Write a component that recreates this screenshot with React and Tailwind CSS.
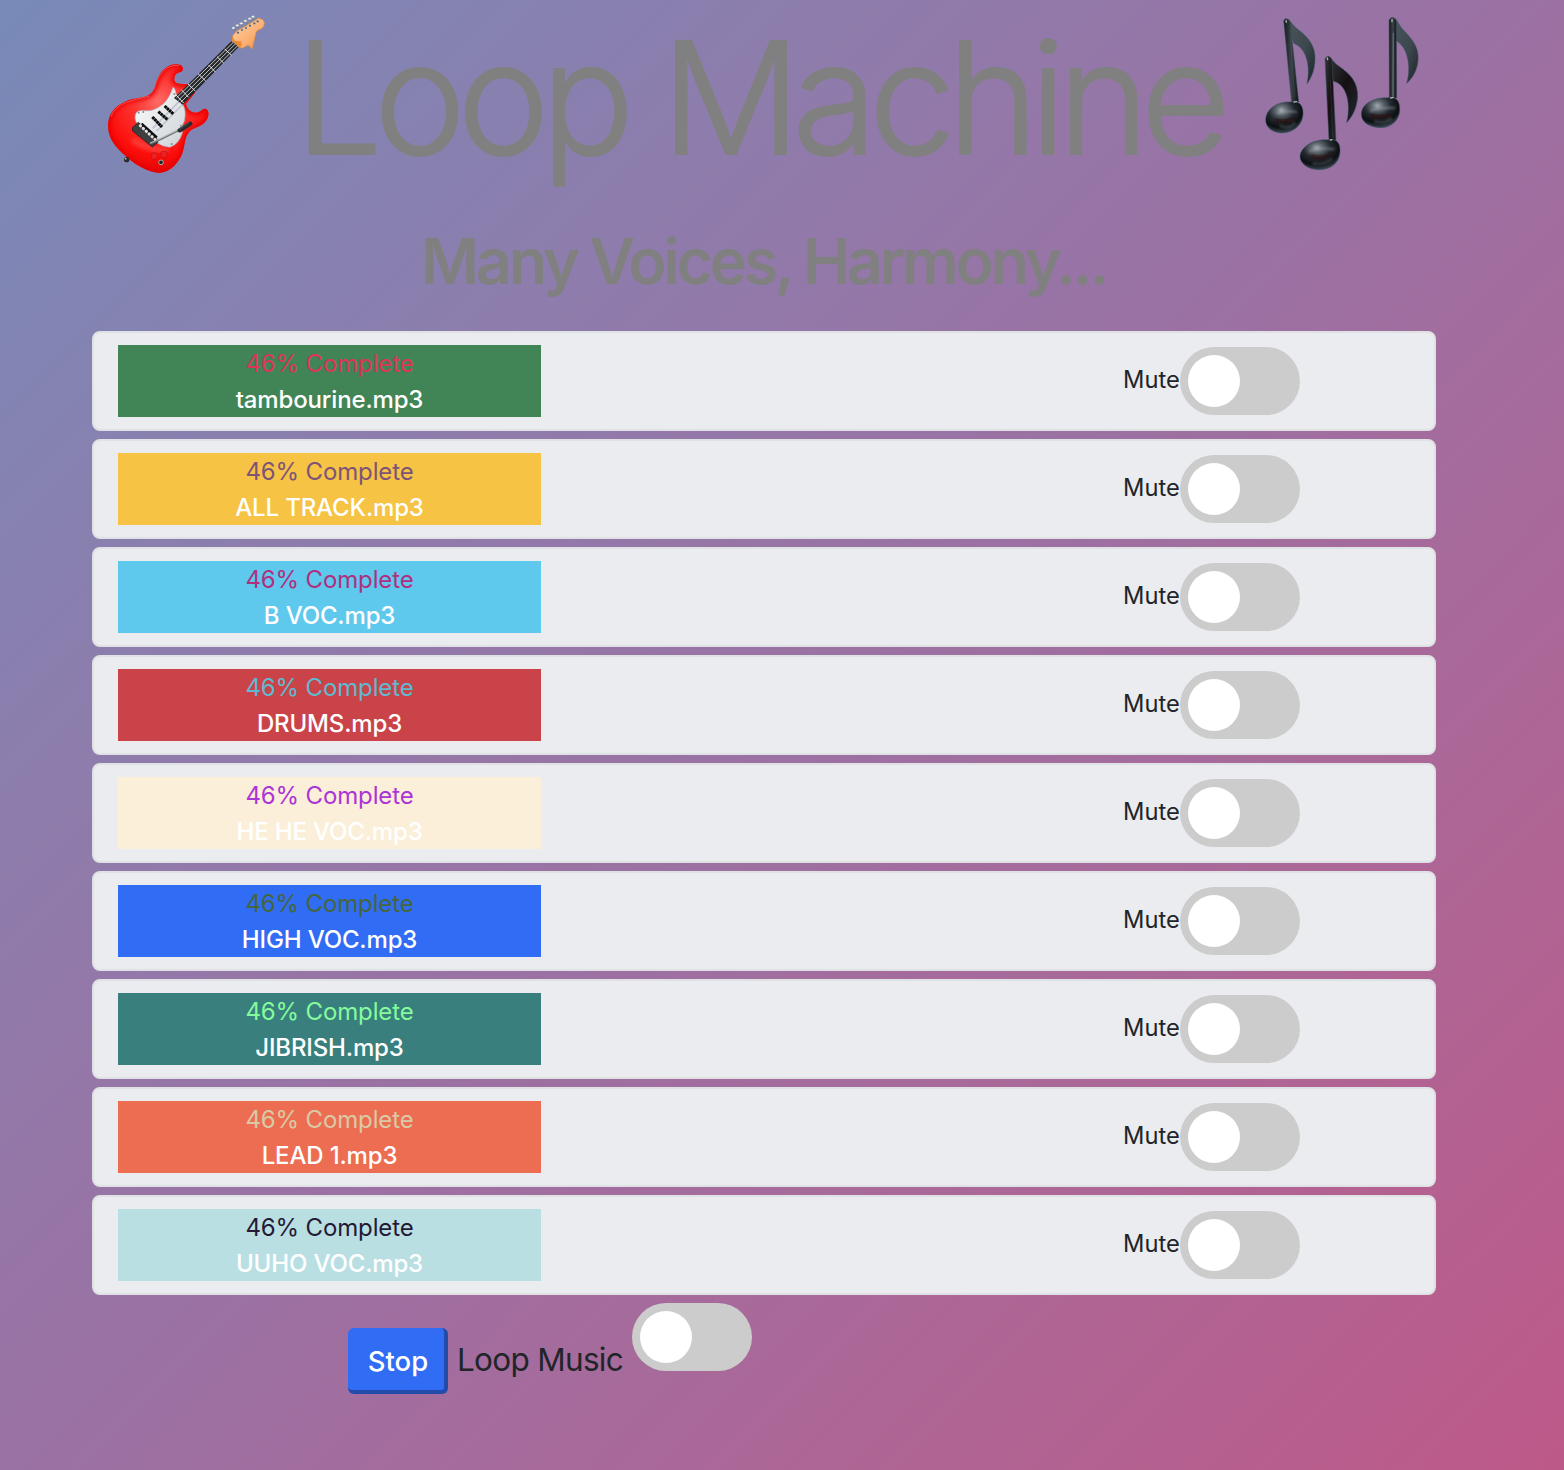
const tracks = [
  { name: "tambourine.mp3", bar: "bg-[#418557]", text: "text-[#dc3558]" },
  { name: "ALL TRACK.mp3", bar: "bg-[#f6c344]", text: "text-[#7d5478]" },
  { name: "B VOC.mp3", bar: "bg-[#5fc8ed]", text: "text-[#b0307f]" },
  { name: "DRUMS.mp3", bar: "bg-[#ca4348]", text: "text-[#5fb9d0]" },
  { name: "HE HE VOC.mp3", bar: "bg-[#fcefd9]", text: "text-[#ab35d6]" },
  { name: "HIGH VOC.mp3", bar: "bg-[#316cf4]", text: "text-[#46663c]" },
  { name: "JIBRISH.mp3", bar: "bg-[#387f7e]", text: "text-[#85fb9c]" },
  { name: "LEAD 1.mp3", bar: "bg-[#ed6d52]", text: "text-[#d9c9a4]" },
  { name: "UUHO VOC.mp3", bar: "bg-[#b9dfe3]", text: "text-[#241a36]" },
];

function Toggle() {
  return (
    <button type="button" role="switch" aria-checked="false" aria-label="toggle" className="flex h-[68px] w-[120px] shrink-0 items-center rounded-full bg-[#ccc] p-2">
      <span className="size-[52px] rounded-full bg-white" />
    </button>
  );
}

function Guitar() {
  return (
    <svg viewBox="0 0 540 540" className="size-[180px] shrink-0" aria-hidden="true">
      <defs>
        <radialGradient id="body" gradientUnits="userSpaceOnUse" cx="190" cy="290" r="220">
          <stop offset="0" stopColor="#ff6a64" />
          <stop offset="0.35" stopColor="#fb3330" />
          <stop offset="0.75" stopColor="#fc0d0a" />
          <stop offset="1" stopColor="#dc0808" />
        </radialGradient>
        <linearGradient id="guard" x1="0" y1="0" x2="1" y2="1">
          <stop offset="0" stopColor="#fff" />
          <stop offset="1" stopColor="#ccd1d6" />
        </linearGradient>
        <linearGradient id="head" x1="0" y1="0" x2="1" y2="1">
          <stop offset="0" stopColor="#ffd0a0" />
          <stop offset="0.6" stopColor="#fbb075" />
          <stop offset="1" stopColor="#e98b35" />
        </linearGradient>
        <filter id="soft" x="-20%" y="-20%" width="140%" height="140%"><feGaussianBlur stdDeviation="7" /></filter>
        <clipPath id="bodyClip">
          <path d="M165 268C185 252 176 235 197 204C214 180 238 173 256 180C266 185 266 197 258 201C246 202 237 210 238 225C240 237 253 237 281 237L301 262L273 297C278 316 289 322 302 323C319 323 322 309 332 312C344 317 343 332 334 346C321 367 300 365 285 378C264 400 273 428 256 458C239 488 213 505 188 503C139 497 98 460 69 431C45 405 37 380 40 351C44 318 68 300 90 290C116 278 150 280 165 268Z" />
        </clipPath>
      </defs>
      <g clipPath="url(#bodyClip)">
        <rect width="540" height="540" fill="url(#body)" />
        <path d="M165 268C185 252 176 235 197 204C214 180 238 173 256 180C266 185 266 197 258 201C246 202 237 210 238 225C240 237 253 237 281 237L301 262L273 297C278 316 289 322 302 323C319 323 322 309 332 312C344 317 343 332 334 346C321 367 300 365 285 378C264 400 273 428 256 458C239 488 213 505 188 503C139 497 98 460 69 431C45 405 37 380 40 351C44 318 68 300 90 290C116 278 150 280 165 268Z" fill="none" stroke="#e90000" strokeWidth="16" filter="url(#soft)" />
        <path d="M48 335Q57 307 92 293Q128 280 163 274M178 251Q189 207 217 188Q235 178 252 182" fill="none" stroke="#ff8b85" strokeWidth="3" opacity="0.5" />
        <path d="M112 405Q170 440 219 435" fill="none" stroke="#ff7770" strokeWidth="18" opacity="0.4" filter="url(#soft)" />
      </g>
      <path d="M234 247Q241 250 244 269L263 298Q275 318 268 348Q257 369 262 383Q252 418 224 427Q200 423 184 413L132 361Q117 348 121 329Q125 314 151 317Q175 321 205 297Q223 280 234 247Z" fill="url(#guard)" stroke="#aeb5bb" strokeWidth="2" />
      <path d="M252 290L173 370M262 299L185 378" stroke="#bfc4d0" strokeWidth="5" />
      <path d="M280 237L409 109L431 126L263 299L237 279Z" fill="#25282b" />
      <path d="M244 279L416 111M250 286L422 116M257 292L428 122" stroke="#f0f0f0" strokeWidth="2.3" />
      <path d="M389 132L410 151M366 155L386 174M341 180L361 201M309 206L332 228M278 236L301 258M259 254L281 277M243 270L266 294" stroke="#e5e7ea" strokeWidth="3" />
      <path d="M411 109L414 91L425 78L443 68L474 50L490 40Q505 41 508 53Q509 65 498 72Q486 74 483 83L472 131L459 121L441 130L428 124L425 114Z" fill="url(#head)" stroke="#e68c37" strokeWidth="2" />
      <path d="M412 92L419 107L439 110L440 122L432 127L424 117L412 109Z" fill="#ed892c" />
      {[[429, 83], [441, 75], [453, 69], [465, 62], [478, 55], [488, 49]].map(([x, y]) => (
        <g key={x}>
          <circle cx={x} cy={y} r="3.5" fill="#4c5357" stroke="#dce2e5" />
          <path d={`M${x - 9} ${y - 5}l-5 -8`} stroke="#747d82" strokeWidth="3" />
          <ellipse cx={x - 14} cy={y - 14} rx="5" ry="3.5" fill="#f1f4f4" stroke="#747d82" />
        </g>
      ))}
      <path d="M209 303L235 327M190 320L218 344M172 336L201 366" stroke="#090909" strokeWidth="9" strokeDasharray="8 1" />
      <path d="M130 352L187 402L189 412L172 426L113 378L112 368Z" fill="#3f4140" stroke="#161818" strokeWidth="2" />
      <path d="M138 358L184 399" stroke="#101111" strokeWidth="12" />
      <path d="M136 362L182 405" stroke="#e4e4e4" strokeWidth="9" strokeLinecap="round" strokeDasharray="1 11" />
      <path d="M165 416L198 402L255 374" fill="none" stroke="#747778" strokeWidth="6" />
      <path d="M165 414L198 400L255 372" fill="none" stroke="#d9dcdd" strokeWidth="2" />
      <path d="M254 376L286 356" stroke="#292c2e" strokeWidth="13" strokeLinecap="round" />
      <path d="M252 373L283 353" stroke="#656b6d" strokeWidth="2" />
      {[[131, 323], [145, 321], [238, 267], [258, 362], [230, 417]].map(([x, y]) => <circle key={x} cx={x} cy={y} r="3" fill="#858b8f" />)}
      <circle cx="178" cy="453" r="10" fill="#ed211f" stroke="#b71412" strokeWidth="2" />
      <circle cx="207" cy="448" r="10" fill="#ed211f" stroke="#b71412" strokeWidth="2" />
      <circle cx="198" cy="472" r="7" fill="#252525" stroke="#aaa" strokeWidth="3" />
      <circle cx="95" cy="464" r="8" fill="#30292c" /><circle cx="92" cy="461" r="3" fill="#a5a1a0" />
    </svg>
  );
}

function Notes() {
  return (
    <svg viewBox="0 0 540 540" className="size-[180px] shrink-0" aria-hidden="true">
      <defs>
        <radialGradient id="nHead" cx="0.42" cy="0.27" r="0.72">
          <stop offset="0" stopColor="#a3a9ae" />
          <stop offset="0.2" stopColor="#616a71" />
          <stop offset="0.48" stopColor="#22292f" />
          <stop offset="0.78" stopColor="#0c0f11" />
          <stop offset="1" stopColor="#3a4751" />
        </radialGradient>
        <linearGradient id="nStem">
          <stop offset="0" stopColor="#14191c" />
          <stop offset="0.5" stopColor="#3a4247" />
          <stop offset="1" stopColor="#101416" />
        </linearGradient>
        <linearGradient id="nFlag" x1="0" y1="0" x2="1" y2="1">
          <stop offset="0" stopColor="#4a545b" />
          <stop offset="0.55" stopColor="#3d474e" />
          <stop offset="1" stopColor="#1b242a" />
        </linearGradient>
        <linearGradient id="nDark" x1="0" y1="0" x2="1" y2="1">
          <stop offset="0" stopColor="#313638" />
          <stop offset="0.5" stopColor="#160f12" />
          <stop offset="1" stopColor="#222a30" />
        </linearGradient>
        <filter id="gleam" x="-30%" y="-100%" width="160%" height="300%"><feGaussianBlur stdDeviation="3.5" /></filter>
      </defs>
      <g stroke="#3b5364" strokeWidth="1.5">
        <path d="M112 43C123 47 124 58 145 74C177 98 197 125 195 165C194 195 184 219 171 236C181 191 174 132 131 115Z" fill="url(#nFlag)" />
        <path d="M101 47Q106 37 114 43Q120 46 121 53L146 291L125 294Z" fill="url(#nStem)" />
        <path d="M124 291C151 286 161 306 159 330C156 364 125 385 93 384C65 382 47 366 47 344C48 309 86 288 124 291Z" fill="url(#nHead)" />
        <path d="M433 40C444 46 443 57 463 78C493 108 510 136 503 175C498 204 484 223 470 235C484 190 475 127 439 107Z" fill="url(#nFlag)" />
        <path d="M417 45Q423 33 433 39Q439 42 439 52L440 279L418 280Z" fill="url(#nStem)" />
        <path d="M414 278C443 274 451 293 449 321C444 349 423 369 389 368C355 366 333 351 334 325C337 295 371 277 414 278Z" fill="url(#nHead)" />
        <path d="M235 155C246 159 248 170 266 183C301 207 325 232 323 277C320 311 307 335 290 353C302 306 295 239 250 229Z" fill="url(#nDark)" />
        <path d="M225 162Q230 149 240 156Q247 161 246 171L258 405L237 408Z" fill="url(#nDark)" />
        <path d="M236 405C263 399 272 418 270 442C267 477 238 496 205 494C173 493 150 476 150 453C154 422 195 401 236 405Z" fill="url(#nHead)" />
      </g>
      <g fill="none" strokeLinecap="round" filter="url(#gleam)">
        <path d="M83 325Q108 316 139 321M362 317Q390 307 434 309M180 438Q211 427 252 432" stroke="#aeb7bc" strokeWidth="5" opacity="0.5" />
        <path d="M78 347Q112 352 130 344M364 333Q400 338 420 333M185 454Q220 463 245 447" stroke="#2e0c0e" strokeWidth="7" />
        <path d="M91 363Q114 374 135 355M375 350Q402 356 424 342M190 476Q221 481 245 463" stroke="#59636a" strokeWidth="5" opacity="0.8" />
      </g>
      <path d="M108 46L109 52M426 43L426 50M232 159L233 164M132 291L140 290M422 279L430 277M241 405L246 404" stroke="#d5d8d8" strokeWidth="4" strokeLinecap="round" opacity="0.75" />
      <path d="M430 83L429 274" stroke="#87939b" strokeWidth="4" opacity="0.5" />
      <path d="M241 222L248 396M119 72L134 276" stroke="#87939b" strokeWidth="2" opacity="0.2" />
    </svg>
  );
}

export default function App() {
  return (
    <main className="h-[1470px] w-[1564px] overflow-hidden bg-linear-135 from-[#788ab8] via-[#9b71a3] to-[#bd5989] px-[92px] font-['Inter',sans-serif] text-[#212529]">
      <header>
        <div className="ml-[3px] flex h-[190px] pt-[5px]">
          <Guitar />
          <h1 className="w-[975px] shrink-0 pl-[20px] text-[155px] leading-[186px] font-light tracking-[-8.4px] whitespace-nowrap text-[#808080] [-webkit-text-stroke:2px_#808080]">Loop Machine</h1>
          <Notes />
        </div>
        <h2 className="flex h-[141px] items-center pl-[329px] text-[63px] leading-[76px] font-semibold tracking-[-3.3px] whitespace-nowrap text-[#808080]">Many Voices, Harmony...</h2>
      </header>
      <section className="flex w-[1344px] flex-col gap-2">
        {tracks.map((t) => (
          <div key={t.name} className="flex h-[100px] items-center rounded-lg border-2 border-[#dfe1e5] bg-[#eaecef] pl-6">
            <div className={`h-[72px] w-[423px] pt-px text-center text-[24px] leading-9 tracking-[-0.15px] ${t.bar}`}>
              <div className={t.text}>46% Complete</div>
              <div className="font-[450] text-white">{t.name}</div>
            </div>
            <div className="ml-[582px] flex items-center">
              <span className="w-[57px] pb-0.5 text-[23.7px] leading-9 whitespace-nowrap">Mute</span>
              <Toggle />
            </div>
          </div>
        ))}
      </section>
      <footer className="flex items-start pt-2 pl-[256px]">
        <button type="button" className="mt-[25px] h-[66px] w-[100px] rounded-md border-r-4 border-b-4 border-[#224baa] bg-[#316cf4] pt-1.5 pl-1 text-[27.5px] leading-none font-medium text-white">Stop</button>
        <span className="mt-[33px] ml-[9px] w-[175px] text-[31.5px] leading-[48px] tracking-[-0.7px] whitespace-nowrap">Loop Music</span>
        <Toggle />
      </footer>
    </main>
  );
}
